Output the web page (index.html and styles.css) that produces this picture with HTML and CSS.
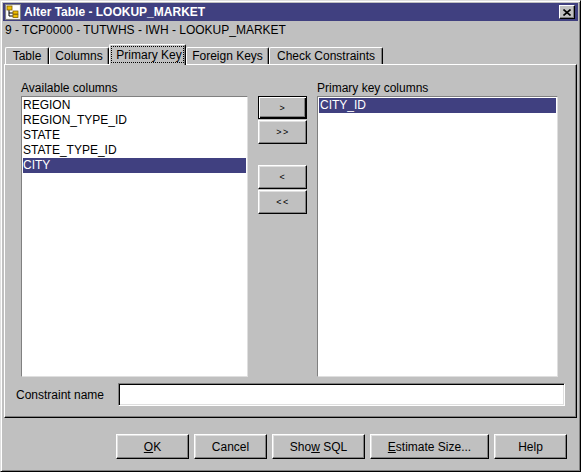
FILE: index.html
```html
<!DOCTYPE html>
<html>
<head>
<meta charset="utf-8">
<title>Alter Table - LOOKUP_MARKET</title>
<link rel="stylesheet" href="styles.css">
</head>
<body>
<div class="window">
  <div class="titlebar">
    <svg class="app-icon" width="16" height="16" viewBox="0 0 16 16">
      <rect x="0.5" y="0.5" width="15" height="15" fill="#e8e8e8" stroke="#808080"/>
      <rect x="1.5" y="1.5" width="13" height="13" fill="#ffffff"/>
      <path d="M4 6V12H8M4 9H8" fill="none" stroke="#000" stroke-width="1"/>
      <rect x="2" y="2" width="5" height="4" fill="#f0c000" stroke="#806000" stroke-width="0.8"/>
      <rect x="8" y="7" width="5" height="3" fill="#f0c000" stroke="#806000" stroke-width="0.8"/>
      <rect x="8" y="10.5" width="5" height="3" fill="#f0c000" stroke="#806000" stroke-width="0.8"/>
    </svg>
    <span class="title">Alter Table - LOOKUP_MARKET</span>
    <div class="close">
      <svg width="8" height="7" viewBox="0 0 8 7"><path d="M0.5 0.5L7.5 6.5M7.5 0.5L0.5 6.5" stroke="#000" stroke-width="1.6" fill="none"/></svg>
    </div>
  </div>
  <div class="subtitle">9 - TCP0000 - TUTWHS - IWH - LOOKUP_MARKET</div>
  <div class="tabs">
    <div class="tab tab-table">Table</div>
    <div class="tab tab-columns">Columns</div>
    <div class="tab tab-pk selected"><span class="focus">Primary Key</span></div>
    <div class="tab tab-fk">Foreign Keys</div>
    <div class="tab tab-cc">Check Constraints</div>
  </div>
  <div class="panel">
    <div class="lists">
      <div class="col col-left">
        <div class="label">Available columns</div>
        <div class="listbox">
          <div class="item">REGION</div>
          <div class="item">REGION_TYPE_ID</div>
          <div class="item">STATE</div>
          <div class="item">STATE_TYPE_ID</div>
          <div class="item sel">CITY</div>
        </div>
      </div>
      <div class="movers">
        <div class="btn mv default">&gt;</div>
        <div class="btn mv mv-pair">&gt;&gt;</div>
        <div class="btn mv mv-group">&lt;</div>
        <div class="btn mv mv-pair">&lt;&lt;</div>
      </div>
      <div class="col col-right">
        <div class="label">Primary key columns</div>
        <div class="listbox">
          <div class="item sel">CITY_ID</div>
        </div>
      </div>
    </div>
    <div class="name-row">
      <div class="name-label">Constraint name</div>
      <div class="textbox"></div>
    </div>
  </div>
  <div class="actions">
    <div class="btn act act-std"><span><u>O</u>K</span></div>
    <div class="btn act act-std"><span>Cancel</span></div>
    <div class="btn act act-sql"><span>Sho<u>w</u> SQL</span></div>
    <div class="btn act act-est"><span><u>E</u>stimate Size...</span></div>
    <div class="btn act act-std"><span>Help</span></div>
  </div>
</div>
</body>
</html>
```

FILE: styles.css
```css
* { box-sizing: border-box; }
html, body { margin: 0; padding: 0; }
body {
  width: 581px;
  height: 472px;
  overflow: hidden;
  background: #c0c0c0;
  font-family: "Liberation Sans", Arial, sans-serif;
  font-size: 12px;
  line-height: 14px;
  color: #000;
}
.window {
  width: 581px;
  height: 472px;
  border: 1px solid;
  border-color: #dfdfdf #000 #000 #dfdfdf;
  box-shadow: inset 1px 1px #fff, inset -1px -1px #808080;
  padding: 2px;
  background: #c0c0c0;
  display: flex;
  flex-direction: column;
}
.titlebar {
  flex: none;
  height: 18px;
  background: #404080;
  color: #fff;
  display: flex;
  align-items: center;
  padding: 0 3px 0 2px;
}
.app-icon { flex: none; display: block; }
.title {
  flex: 1;
  margin-left: 3px;
  font-weight: bold;
  white-space: nowrap;
}
.close {
  flex: none;
  width: 16px;
  height: 14px;
  background: #c0c0c0;
  border: 1px solid;
  border-color: #fff #000 #000 #fff;
  box-shadow: inset -1px -1px #808080;
  display: flex;
  align-items: center;
  justify-content: center;
}
.close svg { display: block; }
.subtitle {
  flex: none;
  height: 14px;
  margin-top: 2px;
  padding-left: 2px;
  white-space: nowrap;
}
.tabs {
  flex: none;
  height: 20px;
  margin-top: 7px;
  padding-left: 2px;
  display: flex;
  align-items: flex-end;
}
.tab {
  flex: none;
  height: 17px;
  padding: 1px 0 1px;
  border-top: 1px solid #fff;
  border-left: 1px solid #fff;
  border-right: 1px solid #000;
  box-shadow: inset -1px 0 #808080;
  border-top-left-radius: 2px;
  border-top-right-radius: 2px;
  text-align: center;
  white-space: nowrap;
}
.tab-table { width: 44px; }
.tab-columns { width: 60px; }
.tab-pk { width: 77px; }
.tab-fk { width: 83px; }
.tab-cc { width: 114px; }
.tab.selected {
  position: relative;
  z-index: 1;
  height: 21px;
  margin-bottom: -1px;
  padding: 1px 0 2px;
  background: #c0c0c0;
}
.focus {
  display: block;
  height: 17px;
  margin: 0 1px;
  padding: 1px 0 0 3px;
  border: 1px dotted #000;
  line-height: 14px;
}
.panel {
  flex: none;
  height: 354px;
  margin: 0 1px;
  border: 1px solid;
  border-color: #fff #000 #000 #fff;
  box-shadow: inset -1px -1px #808080;
  padding: 16px 0 0 11px;
}
.lists {
  display: flex;
  margin-left: 5px;
  height: 296px;
}
.col { flex: none; display: flex; flex-direction: column; }
.col-left { width: 227px; }
.col-right { width: 241px; margin-left: 10px; }
.label { height: 14px; white-space: nowrap; }
.listbox {
  margin-top: 1px;
  height: 281px;
  background: #fff;
  border: 1px solid;
  border-color: #808080 #dfdfdf #dfdfdf #808080;
  padding: 1px;
}
.item {
  height: 15px;
  line-height: 15px;
  white-space: nowrap;
}
.item.sel { background: #404080; color: #fff; }
.col-right .item { padding-left: 1px; }
.movers {
  flex: none;
  width: 49px;
  margin-left: 10px;
  padding-top: 15px;
  display: flex;
  flex-direction: column;
}
.btn {
  background: #c0c0c0;
  border: 1px solid;
  border-color: #fff #000 #000 #fff;
  box-shadow: inset -1px -1px #808080, inset 1px 1px #dfdfdf;
  display: flex;
  align-items: center;
  justify-content: center;
  white-space: nowrap;
}
.mv {
  flex: none;
  height: 24px;
  font-size: 9px;
  letter-spacing: 1.5px;
  padding-left: 1px;
}
.mv-pair { margin-top: 1px; }
.mv-group { margin-top: 21px; }
.btn.default {
  border-color: #000;
  box-shadow: inset 1px 1px #fff, inset -1px -1px #000, inset -2px -2px #808080;
  height: 23px;
}
.name-row {
  display: flex;
  align-items: center;
  margin-top: 6px;
  height: 23px;
}
.name-label { flex: none; width: 102px; white-space: nowrap; }
.textbox {
  flex: none;
  width: 447px;
  height: 23px;
  background: #fff;
  border: 1px solid;
  border-color: #808080 #fff #fff #808080;
  box-shadow: inset 1px 1px #000, inset -1px -1px #dfdfdf;
}
.actions {
  flex: none;
  margin-top: 16px;
  padding-right: 11px;
  display: flex;
  justify-content: flex-end;
  gap: 5px;
}
.act { flex: none; height: 25px; }
.act-std { width: 73px; }
.act-sql { width: 93px; }
.act-est { width: 119px; }
```
